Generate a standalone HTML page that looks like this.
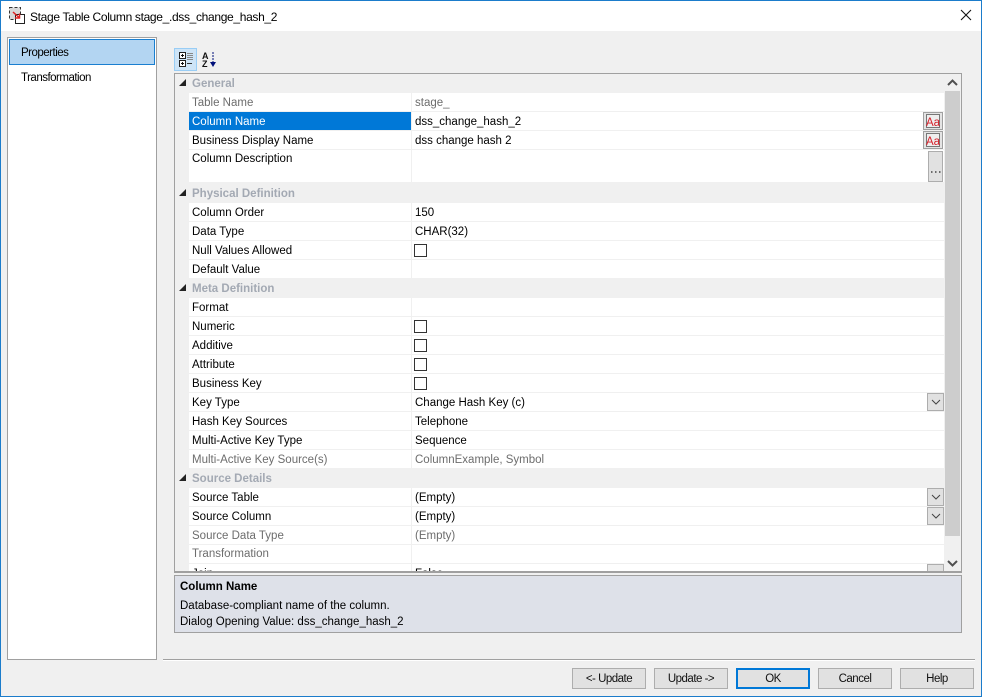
<!DOCTYPE html>
<html><head><meta charset="utf-8"><style>
html,body{margin:0;padding:0}
body{width:982px;height:697px;position:relative;overflow:hidden;background:#f0f0f0;font:11.5px/16px "Liberation Sans",sans-serif;color:#000}
div{position:absolute;box-sizing:border-box;white-space:nowrap}
#win{left:0;top:0;width:982px;height:697px;border:1px solid #1b7ccb;overflow:hidden}
.r{left:15px;width:755px;height:19px;background:#fff;border-bottom:1px solid #f0f0f0}
.n{left:3px;top:2px}
.v{left:226px;top:2px}
.sep{left:222px;top:0;width:1px;height:100%;background:#f0f0f0}
.g{color:#6d6d6d}
.h{left:0;width:770px;height:19px;background:#f0f0f0;color:#a3a9b3;font-weight:bold}
.h span{position:absolute;left:18px;top:2px}
.h i{position:absolute;left:5px;top:5px;width:0;height:0;border-left:7px solid transparent;border-bottom:7px solid #222}
.cb{left:225px;top:3px;width:13px;height:13px;background:#fff;border:1px solid #333}
.dd{left:738px;top:0;width:17px;height:18px;background:#e1e1e1;border:1px solid #adadad}
.btn{top:667px;width:74px;height:21px;background:#e1e1e1;border:1px solid #adadad;text-align:center;line-height:21px;color:#111;letter-spacing:-.5px}
</style></head><body>
<div id="win">
<div style="left:0;top:0;width:980px;height:30px;background:#fff"></div>
<svg style="position:absolute;left:8px;top:6px" width="18" height="18" viewBox="0 0 18 18"><rect x=".5" y=".5" width="11" height="12" fill="#d8d8d8" stroke="#333" stroke-dasharray="3 2"/><rect x="6.500" y="7.500" width="9" height="9" fill="#fff" stroke="#222"/><path d="M4 5l6 5.500M10.500 6.500v4.500H6" fill="none" stroke="#d22" stroke-width="1.500"/></svg>
<div style="left:29px;top:8px;font-size:12px;letter-spacing:-.33px">Stage Table Column stage_.dss_change_hash_2</div>
<svg style="position:absolute;left:959px;top:8px" width="13" height="13" viewBox="0 0 13 13"><path d="M1 1l10 10M11 1L1 11" stroke="#111" stroke-width="1.100" fill="none"/></svg>

<div style="left:6px;top:36px;width:150px;height:623px;background:#fff;border:1px solid #a0a0a0"></div>
<div style="left:8px;top:38px;width:146px;height:26px;background:#b3d5f2;border:1px solid #1a7fd0"></div>
<div style="left:20px;top:44px;letter-spacing:-.5px">Properties</div>
<div style="left:20px;top:69px;letter-spacing:-.5px">Transformation</div>

<div style="left:173px;top:47px;width:23px;height:23px;background:#cde4f7;border:1px solid #99cdf5"></div>
<svg style="position:absolute;left:177px;top:50px" width="17" height="17" viewBox="0 0 17 17"><rect x="1.500" y="1.500" width="6" height="6" fill="#fff" stroke="#222"/><path d="M3 4.500h3M4.500 3v3" stroke="#111"/><rect x="1.500" y="9.500" width="6" height="6" fill="#fff" stroke="#222"/><path d="M3 12.500h3M4.500 11v3" stroke="#111"/><path d="M9 2.500h6M9 4.500h6M9 6.500h6M9 8.500h6" stroke="#888"/><path d="M9 12.500h5" stroke="#333"/></svg>
<svg style="position:absolute;left:200px;top:50px" width="17" height="17" viewBox="0 0 17 17"><text x="1" y="8" font-family="Liberation Sans" font-weight="bold" font-size="9" fill="#111">A</text><text x="1" y="16" font-family="Liberation Sans" font-weight="bold" font-size="9" fill="#111">Z</text><path d="M12 1v11" stroke="#00107a" stroke-dasharray="2 1"/><path d="M9 11h6l-3 5z" fill="#00107a"/></svg>

<div style="left:173px;top:72px;width:788px;height:500px;background:#f0f0f0;border:1px solid #a0a0a0;border-bottom-width:2px;overflow:hidden">
<div style="left:-1px;top:-1px;width:788px;height:500px">
 <div class="h" style="top:1px"><i></i><span>General</span></div>
 <div class="r" style="top:20px"><div class="sep"></div><div class="n g">Table Name</div><div class="v g">stage_</div></div>
 <div class="r" style="top:39px"><div style="left:0;top:0;width:222px;height:18px;background:#0078d7"></div><div class="sep"></div><div class="n" style="color:#fff">Column Name</div><div class="v">dss_change_hash_2</div>
  <svg style="position:absolute;left:734px;top:0" width="20" height="18" viewBox="0 0 20 18"><rect x=".5" y=".5" width="19" height="17" fill="#e4e4e4" stroke="#a0a0a0"/><rect x="3.500" y="2.500" width="13" height="13" fill="#eee" stroke="#777"/><text x="3" y="14" font-family="Liberation Sans" font-size="11.500" fill="#d5202a">Aa</text></svg></div>
 <div class="r" style="top:58px"><div class="sep"></div><div class="n">Business Display Name</div><div class="v">dss change hash 2</div>
  <svg style="position:absolute;left:734px;top:0" width="20" height="18" viewBox="0 0 20 18"><rect x=".5" y=".5" width="19" height="17" fill="#e4e4e4" stroke="#a0a0a0"/><rect x="3.500" y="2.500" width="13" height="13" fill="#eee" stroke="#777"/><text x="3" y="14" font-family="Liberation Sans" font-size="11.500" fill="#d5202a">Aa</text></svg></div>
 <div class="r" style="top:77px;height:33px"><div class="sep"></div><div class="n" style="top:1px">Column Description</div>
  <div style="left:739px;top:1px;width:15px;height:31px;background:#e1e1e1;border:1px solid #adadad"><svg style="position:absolute;left:2px;top:19px" width="10" height="3"><path d="M0 1h1.500M4 1h1.500M8 1h1.500" stroke="#444" stroke-width="1.500"/></svg></div></div>
 <div class="h" style="top:111px"><i></i><span>Physical Definition</span></div>
 <div class="r" style="top:130px"><div class="sep"></div><div class="n">Column Order</div><div class="v">150</div></div>
 <div class="r" style="top:149px"><div class="sep"></div><div class="n">Data Type</div><div class="v">CHAR(32)</div></div>
 <div class="r" style="top:168px"><div class="sep"></div><div class="n">Null Values Allowed</div><div class="cb"></div></div>
 <div class="r" style="top:187px"><div class="sep"></div><div class="n">Default Value</div></div>
 <div class="h" style="top:206px"><i></i><span>Meta Definition</span></div>
 <div class="r" style="top:225px"><div class="sep"></div><div class="n">Format</div></div>
 <div class="r" style="top:244px"><div class="sep"></div><div class="n">Numeric</div><div class="cb"></div></div>
 <div class="r" style="top:263px"><div class="sep"></div><div class="n">Additive</div><div class="cb"></div></div>
 <div class="r" style="top:282px"><div class="sep"></div><div class="n">Attribute</div><div class="cb"></div></div>
 <div class="r" style="top:301px"><div class="sep"></div><div class="n">Business Key</div><div class="cb"></div></div>
 <div class="r" style="top:320px"><div class="sep"></div><div class="n">Key Type</div><div class="v">Change Hash Key (c)</div><div class="dd"><svg style="position:absolute;left:3px;top:5px" width="10" height="6"><path d="M1 1l4 4 4-4" fill="none" stroke="#444"/></svg></div></div>
 <div class="r" style="top:339px"><div class="sep"></div><div class="n">Hash Key Sources</div><div class="v">Telephone</div></div>
 <div class="r" style="top:358px"><div class="sep"></div><div class="n">Multi-Active Key Type</div><div class="v">Sequence</div></div>
 <div class="r" style="top:377px"><div class="sep"></div><div class="n g">Multi-Active Key Source(s)</div><div class="v g">ColumnExample, Symbol</div></div>
 <div class="h" style="top:396px"><i></i><span>Source Details</span></div>
 <div class="r" style="top:415px"><div class="sep"></div><div class="n">Source Table</div><div class="v">(Empty)</div><div class="dd"><svg style="position:absolute;left:3px;top:5px" width="10" height="6"><path d="M1 1l4 4 4-4" fill="none" stroke="#444"/></svg></div></div>
 <div class="r" style="top:434px"><div class="sep"></div><div class="n">Source Column</div><div class="v">(Empty)</div><div class="dd"><svg style="position:absolute;left:3px;top:5px" width="10" height="6"><path d="M1 1l4 4 4-4" fill="none" stroke="#444"/></svg></div></div>
 <div class="r" style="top:453px"><div class="sep"></div><div class="n g">Source Data Type</div><div class="v g">(Empty)</div></div>
 <div class="r" style="top:472px"><div class="sep"></div><div class="n g" style="top:1px">Transformation</div></div>
 <div class="r" style="top:491px"><div class="sep"></div><div class="n">Join</div><div class="v">False</div><div class="dd"></div></div>
 <div style="left:770px;top:0;width:18px;height:500px;background:#f0f0f0"></div>
 <div style="left:771px;top:18px;width:15px;height:445px;background:#cdcdcd"></div>
 <svg style="position:absolute;left:773px;top:6px" width="11" height="7"><path d="M1 6l4.500-4.500L10 6" fill="none" stroke="#505050" stroke-width="2"/></svg>
 <svg style="position:absolute;left:773px;top:487px" width="11" height="7"><path d="M1 1l4.500 4.500L10 1" fill="none" stroke="#505050" stroke-width="2"/></svg>
</div>
</div>

<div style="left:173px;top:574px;width:788px;height:58px;background:#dee1e9;border:1px solid #a0a0a0"></div>
<div style="left:179px;top:578px;font-weight:bold">Column Name</div>
<div style="left:179px;top:597px">Database-compliant name of the column.</div>
<div style="left:179px;top:613px">Dialog Opening Value: dss_change_hash_2</div>

<div style="left:162px;top:658px;width:812px;height:1px;background:#a0a0a0"></div>
<div style="left:162px;top:659px;width:812px;height:1px;background:#fff"></div>

<div class="btn" style="left:571px">&lt;- Update</div>
<div class="btn" style="left:653px">Update -&gt;</div>
<div class="btn" style="left:735px;border:2px solid #0078d7;line-height:19px">OK</div>
<div class="btn" style="left:817px">Cancel</div>
<div class="btn" style="left:899px">Help</div>
</div>
</body></html>
